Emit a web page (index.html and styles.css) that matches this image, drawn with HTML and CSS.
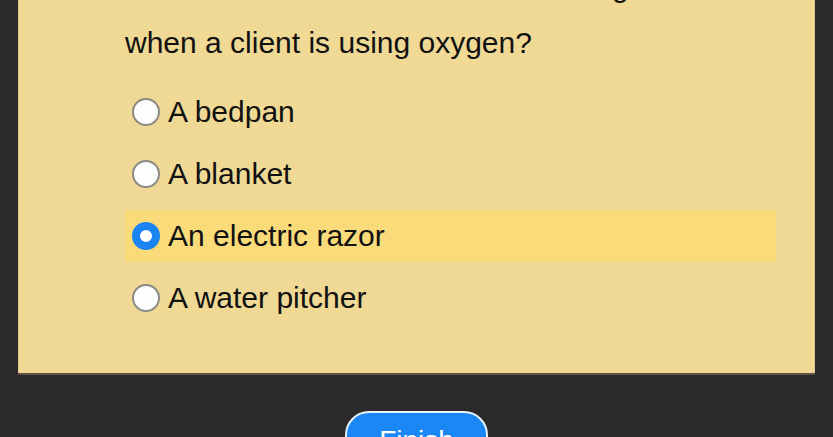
FILE: index.html
```html
<!DOCTYPE html>
<html>
<head>
<meta charset="utf-8">
<link rel="stylesheet" href="styles.css">
</head>
<body>
<div class="card">
  <p class="question">Which item should the nurse not bring<br>when a client is using oxygen?</p>
  <div class="options">
    <label class="option"><span class="radio"></span><span>A bedpan</span></label>
    <label class="option"><span class="radio"></span><span>A blanket</span></label>
    <label class="option selected"><span class="radio checked"></span><span>An electric razor</span></label>
    <label class="option"><span class="radio"></span><span>A water pitcher</span></label>
  </div>
</div>
<div class="actions">
  <button class="finish">Finish</button>
</div>
</body>
</html>
```
FILE: styles.css
```css
html, body {
  margin: 0;
  padding: 0;
  background: #2a2a2a;
  overflow: hidden;
  height: 437px;
}
body {
  font-family: "Liberation Sans", Arial, sans-serif;
  color: #111111;
}
.card {
  margin: -60px 18px 0 18px;
  padding: 19px 39px 49px 107px;
  background: #efd994;
  border-bottom: 2px solid #5f5246;
  box-shadow: inset 1px 0 0 #e0c98a, inset -1px 0 0 #e0c98a;
}
.question {
  margin: 0;
  font-size: 30px;
  line-height: 56px;
}
.options {
  display: flex;
  flex-direction: column;
  gap: 10px;
  margin-top: 15px;
}
.option {
  display: flex;
  align-items: center;
  gap: 8px;
  height: 52px;
  padding-left: 7px;
  font-size: 30px;
}
.option.selected {
  background: #fadb7a;
}
.radio {
  box-sizing: border-box;
  width: 28px;
  height: 28px;
  border-radius: 50%;
  border: 2px solid #8c8a86;
  background: #fdfdfd;
  flex: none;
}
.radio.checked {
  border: 8px solid #1a84f2;
  background: #ffffff;
}
.actions {
  display: flex;
  justify-content: center;
  margin-top: 36px;
}
.finish {
  width: 143px;
  height: 60px;
  background: #1b87f4;
  color: #ffffff;
  border: 2px solid #e8f0fa;
  border-radius: 24px;
  font-family: "Liberation Sans", Arial, sans-serif;
  font-size: 28px;
  padding: 12px 0 0 0;
  display: flex;
  justify-content: center;
  align-items: flex-start;
}
```
